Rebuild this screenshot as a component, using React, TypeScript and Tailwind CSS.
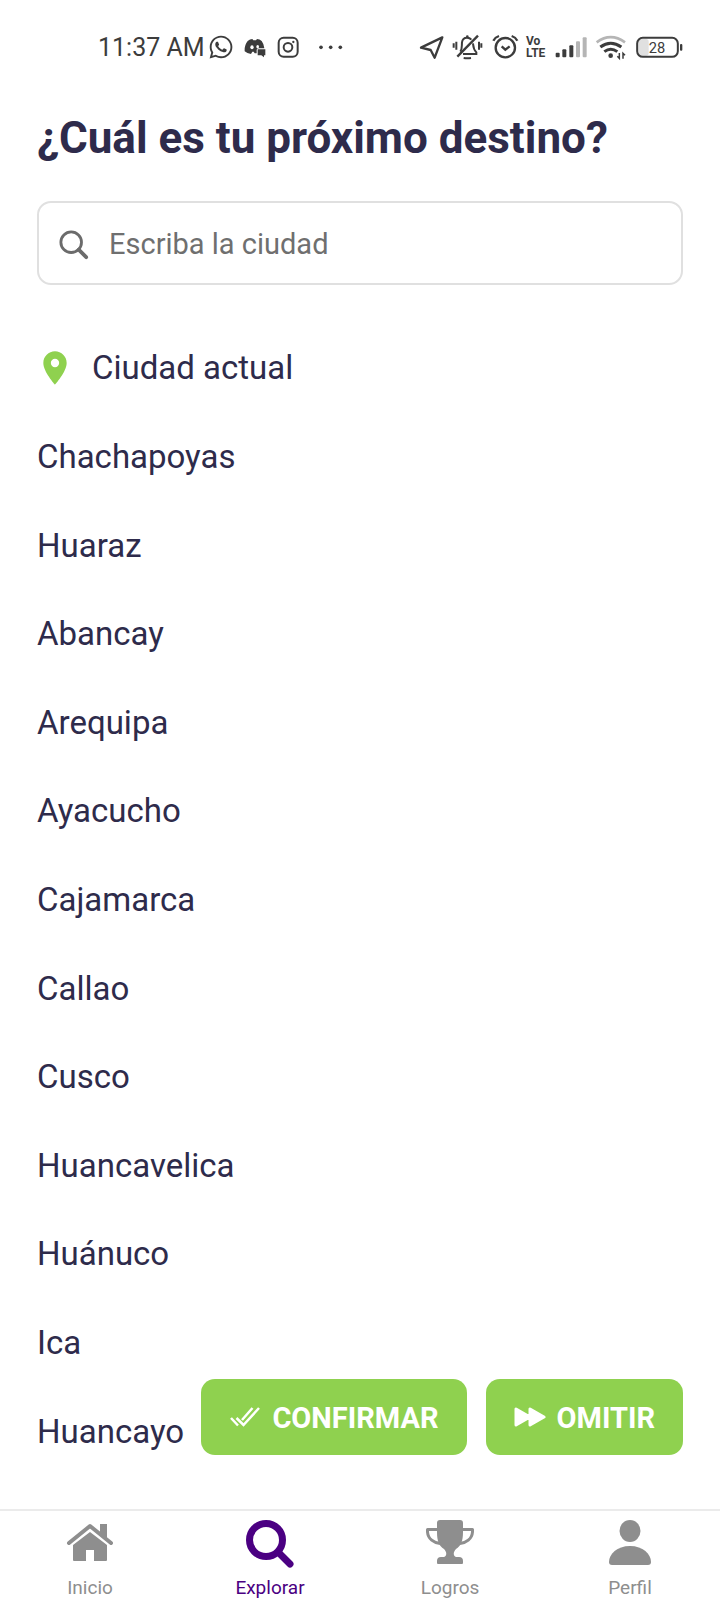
import { useState } from 'react';
import type { ReactNode } from 'react';
import { FaWhatsapp } from 'react-icons/fa';
import { MdLocationOn } from 'react-icons/md';

const CITIES = [
  'Chachapoyas',
  'Huaraz',
  'Abancay',
  'Arequipa',
  'Ayacucho',
  'Cajamarca',
  'Callao',
  'Cusco',
  'Huancavelica',
  'Huánuco',
  'Ica',
  'Huancayo',
];

function StatusBar() {
  return (
    <div className="flex items-center justify-between pt-8 pl-[98px] pr-[35px] text-[#3c3c3c]">
      <div className="flex h-[30px] items-center gap-[9px]">
        <div className="flex items-center gap-[3px]">
          <span className="pt-0.5 text-[25px] leading-[30px] whitespace-nowrap">11:37 AM</span>
          <FaWhatsapp className="size-[26px]" />
        </div>
        {/* discord with a message bubble */}
        <svg className="h-[30px] w-6" viewBox="459 20 72 90" fill="currentColor">
          <path d="M473 47q7-6 14-6l3 4h8l3-4q8 0 14 6 7 9 8 22h-18q-5 0-5 5v10h-6l-3-5h-4l-4 7q-12-2-19-8-1-19 9-31z" />
          <ellipse cx="486" cy="66" rx="5" ry="6" fill="white" />
          <ellipse cx="503" cy="64" rx="4" ry="5" fill="white" />
          <path d="M503 72h23v18h-4v6l-8-6h-11z" />
        </svg>
        <svg className="h-[30px] w-6" viewBox="558 20 72 90" fill="none" stroke="currentColor" strokeWidth="6">
          <rect x="566" y="37" width="57" height="57" rx="15" />
          <circle cx="594" cy="66" r="13" />
          <circle cx="610" cy="50" r="3.500" fill="currentColor" stroke="none" />
        </svg>
        <svg className="h-[30px] w-[37px]" viewBox="657 20 111 90" fill="currentColor">
          <circle cx="693" cy="66" r="5.500" />
          <circle cx="722" cy="66" r="5.500" />
          <circle cx="751" cy="66" r="5.500" />
        </svg>
      </div>

      <div className="flex h-[30px] items-center gap-1.5">
        <svg className="h-[30px] w-[26px]" viewBox="26 20 78 90" fill="none" stroke="currentColor" strokeWidth="7" strokeLinejoin="round">
          <path d="M96 36L32 67l29 7 12 23z" />
        </svg>
        <svg className="h-[30px] w-[33px]" viewBox="122 20 99 90" fill="none" stroke="currentColor" strokeWidth="6">
          <path d="M150 79c6-8 4-17 5-28 1-9 7-14 15-14 6 0 10 2 13 6M188 54c1 12 1 18 10 27v5h-40" />
          <path d="M141 94l62-63" strokeWidth="7" />
          <path d="M160 98q11 2 22 0M138 49v24M130 54v13M206 49v24M213 54v13" />
          <circle cx="171" cy="34" r="4" fill="currentColor" stroke="none" />
        </svg>
        <svg className="h-[30px] w-[30px]" viewBox="239 20 90 90" fill="none" stroke="currentColor" strokeWidth="7">
          <circle cx="285" cy="67" r="29" />
          <path d="M274 63l11 10 13-10M249 46q5-10 17-14M321 46q-5-10-17-14" />
        </svg>
        <div className="flex w-[23px] flex-col text-[12px] leading-3 font-bold">
          <span>Vo</span>
          <span>LTE</span>
        </div>
        <svg className="h-[30px] w-[33px]" viewBox="434 20 99 90" fill="currentColor">
          <rect x="436" y="82" width="12" height="14" rx="3" />
          <rect x="456" y="72" width="12" height="24" rx="3" />
          <rect x="477" y="60" width="12" height="36" rx="3" />
          <rect x="497" y="48" width="12" height="48" rx="3" fill="#b5b5b5" />
          <rect x="517" y="36" width="12" height="60" rx="3" fill="#b5b5b5" />
        </svg>
        <svg className="h-[30px] w-[33px]" viewBox="551 20 99 90" fill="none" stroke="currentColor" strokeWidth="8">
          <path d="M559 51q42-31 85 0" stroke="#b5b5b5" />
          <path d="M570 65q31-23 63 0M582 79q19-15 39 0" strokeWidth="9" />
          <circle cx="601" cy="91" r="7" fill="currentColor" stroke="none" />
          <path d="M627 83v16l-6-6M638 100V84l6 6" strokeWidth="4.500" />
        </svg>
        <svg className="h-[30px] w-[52px]" viewBox="668 20 156 90">
          <rect x="684" y="41" width="31" height="50" rx="8" fill="#e0e0e0" />
          <rect x="680.500" y="37.500" width="122" height="57" rx="17" fill="none" stroke="currentColor" strokeWidth="6" />
          <rect x="809" y="56" width="7" height="20" rx="3" fill="currentColor" />
          <text x="740" y="82" textAnchor="middle" fontSize="44" fill="currentColor">28</text>
        </svg>
      </div>
    </div>
  );
}

function HomeIcon() {
  return (
    <svg className="size-12" viewBox="0 0 48 48" fill="currentColor">
      <path d="M3 23L24 6l21 17" fill="none" stroke="currentColor" strokeWidth="4" strokeLinecap="round" strokeLinejoin="round" />
      <path d="M34 4h7v15l-7-6zM24 12l17 13v15q0 1-1 1H28V30h-8v11H8q-1 0-1-1V25z" />
    </svg>
  );
}

function ExploreIcon() {
  return (
    <svg className="size-12" viewBox="0 0 48 48" fill="none" stroke="currentColor">
      <circle cx="20" cy="20" r="16.500" strokeWidth="7" />
      <path d="M33 33l11 11" strokeWidth="7" strokeLinecap="round" />
    </svg>
  );
}

function TrophyIcon() {
  return (
    <svg className="size-12" viewBox="0 0 48 48" fill="currentColor">
      <path d="M14 0h20q3 0 3 3v9c0 9-2 14-7 17-3 3-3 7 0 8h3q4 0 4 4v2q0 1-1 1H12q-1 0-1-1v-2q0-4 4-4h3c3-1 3-5 0-8-5-3-7-8-7-17V3q0-3 3-3z" />
      <path d="M12 9.500H1.500V12C2 19 8 23 14 23.500M36 9.500h10.500V12C46 19 40 23 34 23.500" fill="none" stroke="currentColor" strokeWidth="3" strokeLinejoin="round" />
    </svg>
  );
}

function PersonIcon() {
  return (
    <svg className="size-12" viewBox="0 0 48 48" fill="currentColor">
      <ellipse cx="24" cy="11" rx="10.500" ry="11" />
      <path d="M24 26c13 0 21 8 21 16 0 2-1 3-3 3H6c-2 0-3-1-3-3 0-8 8-16 21-16z" />
    </svg>
  );
}

interface NavTab {
  label: string;
  icon: ReactNode;
}

const TABS: NavTab[] = [
  { label: 'Inicio', icon: <HomeIcon /> },
  { label: 'Explorar', icon: <ExploreIcon /> },
  { label: 'Logros', icon: <TrophyIcon /> },
  { label: 'Perfil', icon: <PersonIcon /> },
];

export default function App() {
  const [query, setQuery] = useState('');
  const [activeTab, setActiveTab] = useState('Explorar');

  const cities = CITIES.filter((city) => city.toLowerCase().includes(query.toLowerCase()));

  return (
    <div className="flex min-h-screen flex-col bg-white font-[Roboto,sans-serif] text-[#2e2b4b]">
      <StatusBar />

      <header className="flex flex-col gap-[37px] px-[37px] pt-[50px]">
        <h1 className="text-[44px] leading-[52px] font-bold">¿Cuál es tu próximo destino?</h1>
        <label className="flex h-[84px] items-center gap-5 rounded-[14px] border-2 border-[#e0e0e0] pt-1 pl-5">
          <svg className="size-[30px] shrink-0 text-[#6b6b6b]" viewBox="0 0 32 32" fill="none" stroke="currentColor" strokeWidth="3" strokeLinecap="round">
            <circle cx="13" cy="13" r="11" />
            <path d="M21 21l8 8" strokeWidth="4" />
          </svg>
          <input
            type="text"
            aria-label="Ciudad"
            value={query}
            onChange={(e) => setQuery(e.target.value)}
            placeholder="Escriba la ciudad"
            className="min-w-0 flex-1 text-[29px] outline-none placeholder:text-[#6f6f6f]"
          />
        </label>
      </header>

      <main className="relative flex flex-1 flex-col px-[37px] pt-[39px] pb-[33px]">
        <ul className="grid flex-1 auto-rows-fr text-[33px] leading-10">
          <li className="flex">
            <button type="button" className="flex flex-1 items-center gap-[17px] text-left">
              <MdLocationOn className="-ml-0.5 size-10 text-[#8fd14f]" />
              Ciudad actual
            </button>
          </li>
          {cities.map((city) => (
            <li key={city} className="flex">
              <button type="button" className="flex-1 text-left" onClick={() => setQuery(city)}>
                {city}
              </button>
            </li>
          ))}
        </ul>

        {/* floats over the end of the list */}
        <div className="absolute right-[37px] bottom-[54px] flex gap-[19px] text-[29px] font-bold text-white">
          <button type="button" className="flex h-[76px] items-center gap-[11px] rounded-[14px] bg-[#8fd14f] px-7">
            <svg className="h-5 w-8" viewBox="0 0 32 20" fill="none" stroke="currentColor" strokeWidth="2.500">
              <path d="M2 11l7 7.500M7.500 11l7 7L30 1M13 13L23.500 1" />
            </svg>
            <span className="pt-1">CONFIRMAR</span>
          </button>
          <button type="button" className="flex h-[76px] items-center gap-[11px] rounded-[14px] bg-[#8fd14f] px-7">
            <svg className="h-5 w-8" viewBox="0 0 32 20" fill="currentColor" stroke="currentColor" strokeWidth="3" strokeLinejoin="round">
              <path d="M2 2v16l14-8zM16 2v16l14-8z" />
            </svg>
            <span className="pt-1">OMITIR</span>
          </button>
        </div>
      </main>

      <nav className="grid grid-cols-4 border-t-2 border-[#ebebeb] pt-[9px]">
        {TABS.map((tab) => (
          <button
            key={tab.label}
            type="button"
            onClick={() => setActiveTab(tab.label)}
            className={
              tab.label === activeTab
                ? 'flex flex-col items-center gap-2 text-[#4b0082]'
                : 'flex flex-col items-center gap-2 text-[#8e8e8e]'
            }
          >
            {tab.icon}
            <span className="text-[19px] leading-6">{tab.label}</span>
          </button>
        ))}
      </nav>
    </div>
  );
}
